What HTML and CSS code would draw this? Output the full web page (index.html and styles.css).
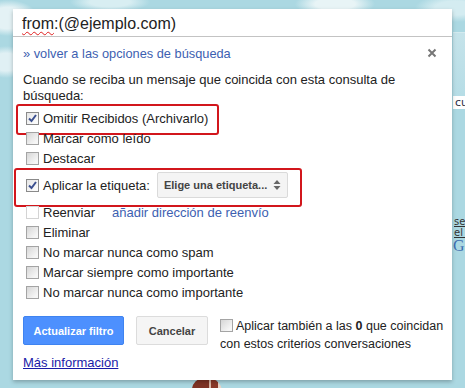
FILE: index.html
```html
<!DOCTYPE html>
<html lang="es">
<head>
<meta charset="utf-8">
<title>Filtro</title>
<link rel="stylesheet" href="styles.css">
</head>
<body>
<div class="page">
  <div class="backdrop">
    <div class="bd-top"></div>
    <div class="bd-band"></div>
    <div class="bd-row">cu</div>
    <div class="bd-fill"></div>
    <div class="bd-link">se</div>
    <div class="bd-link">el p</div>
    <div class="bd-g">G</div>
  </div>
  <div class="doodle"></div>
  <div class="dialog">
    <div class="search"><span class="squiggle">from</span>:(@ejemplo.com)</div>
    <div class="content">
      <div class="head">
        <a class="back" href="#">» volver a las opciones de búsqueda</a>
        <svg class="close" width="10" height="10" viewBox="0 0 10 10"><path d="M1.5 1.5 L8.5 8.5 M8.5 1.5 L1.5 8.5" stroke="#777" stroke-width="2" fill="none"/></svg>
      </div>
      <p class="intro">Cuando se reciba un mensaje que coincida con esta consulta de búsqueda:</p>
      <ul class="opts">
        <li class="opt hl hl1"><span class="cb checked"><svg width="11" height="11" viewBox="0 0 11 11"><path d="M2 5.5 L4.5 8 L9 2" stroke="#3b4f8f" stroke-width="2" fill="none"/></svg></span>Omitir Recibidos (Archivarlo)</li>
        <li class="opt"><span class="cb"></span>Marcar como leído</li>
        <li class="opt"><span class="cb"></span>Destacar</li>
        <li class="opt tall hl hl2"><span class="cb checked"><svg width="11" height="11" viewBox="0 0 11 11"><path d="M2 5.5 L4.5 8 L9 2" stroke="#3b4f8f" stroke-width="2" fill="none"/></svg></span>Aplicar la etiqueta:<span class="select">Elige una etiqueta...<svg class="arrows" width="8" height="12" viewBox="0 0 8 12"><path d="M0.5 5 L4 1 L7.5 5 Z M0.5 7 L4 11 L7.5 7 Z" fill="#666"/></svg></span></li>
        <li class="opt"><span class="cb disabled"></span>Reenviar<a class="fwd" href="#">añadir dirección de reenvío</a></li>
        <li class="opt"><span class="cb"></span>Eliminar</li>
        <li class="opt"><span class="cb"></span>No marcar nunca como spam</li>
        <li class="opt"><span class="cb"></span>Marcar siempre como importante</li>
        <li class="opt"><span class="cb"></span>No marcar nunca como importante</li>
      </ul>
      <div class="actions">
        <button class="btn primary">Actualizar filtro</button>
        <button class="btn">Cancelar</button>
        <div class="also"><span class="cb"></span>Aplicar también a las <b>0</b> que coincidan<br>con estos criterios conversaciones</div>
      </div>
      <a class="more" href="#">Más información</a>
    </div>
  </div>
</div>
</body>
</html>
```
FILE: styles.css
```css
* { box-sizing: border-box; }
html, body { margin: 0; padding: 0; }
body {
  font-family: "Liberation Sans", Arial, sans-serif;
  background: #abd8e2;
}
.page {
  position: relative;
  width: 465px;
  height: 388px;
  overflow: hidden;
  background:
    radial-gradient(ellipse 30px 18px at 8px 18px, #e4f2f5 60%, rgba(228,242,245,0) 100%),
    radial-gradient(ellipse 24px 16px at 6px 62px, #e0f0f4 55%, rgba(224,240,244,0) 100%),
    radial-gradient(ellipse 40px 10px at 110px 2px, #d8eef2 50%, rgba(216,238,242,0) 100%),
    radial-gradient(ellipse 40px 12px at 335px 4px, #e8f4f6 50%, rgba(232,244,246,0) 100%),
    radial-gradient(ellipse 40px 14px at 455px 8px, #d4ecf1 50%, rgba(212,236,241,0) 100%),
    #abd8e2;
}
.backdrop {
  display: flex;
  flex-direction: column;
  padding-left: 453px;
  height: 100%;
  font-family: "DejaVu Sans", sans-serif;
  font-size: 12px;
  color: #222;
  white-space: nowrap;
}
.bd-top { height: 32px; }
.bd-band { height: 64px; background: linear-gradient(#c5e3ea, #b6dde6); border-top: 1px solid #d3eaef; }
.bd-row { height: 13px; background: #fff; line-height: 13px; padding-left: 2px; color: #2a2a40; font-size: 11px; }
.bd-fill { height: 107px; }
.bd-link { line-height: 11px; height: 11px; text-decoration: underline; color: #333; padding-left: 1px; font-size: 10px; }
.bd-g { font-family: "Liberation Serif", serif; font-size: 16px; color: #3f6fb0; line-height: 16px; }
.doodle {
  position: absolute;
  left: 192px;
  top: 378px;
  width: 30px;
  height: 14px;
  border-radius: 12px 14px 0 0;
  background: linear-gradient(90deg, #7e3325 0 55%, #d9b7a6 55% 62%, #8a3a2a 62% 85%, #e9d3c6 85%);
}
.dialog {
  position: absolute;
  left: 13px;
  top: 9px;
  width: 439px;
  height: 371px;
  background: #fff;
  box-shadow: 0 2px 4px rgba(0,0,0,0.25);
}
.search {
  height: 28px;
  border-bottom: 1px solid #c3c3c3;
  padding: 4px 0 0 9px;
  font-size: 16px;
  line-height: 22px;
  color: #222;
}
.squiggle {
  text-decoration: underline wavy #e02020;
  text-decoration-thickness: 1px;
  text-underline-offset: 2px;
}
.content { padding: 8px 10px 0 10px; }
.head {
  display: flex;
  align-items: center;
  justify-content: space-between;
  height: 16px;
}
.back {
  font-size: 12.8px;
  color: #3d5fb1;
  text-decoration: none;
}
.close { margin-right: 5px; }
.intro {
  margin: 11px 0 4px 0;
  font-size: 13px;
  line-height: 16px;
  color: #222;
  width: 400px;
}
.opts { list-style: none; margin: 0; padding: 0; }
.opt {
  position: relative;
  display: flex;
  align-items: center;
  height: 20px;
  font-size: 13px;
  color: #222;
  padding-left: 3px;
}
.opt.tall { height: 34px; }
.hl::after {
  content: "";
  position: absolute;
  border: 2px solid #d2161c;
  border-radius: 3px;
  pointer-events: none;
}
.hl1::after { left: -7px; top: -4px; width: 199px; height: 27px; }
.hl2::after { left: -9px; top: 0px; width: 284px; height: 35px; }
.cb {
  display: inline-flex;
  align-items: center;
  justify-content: center;
  width: 13px;
  height: 13px;
  margin-right: 4px;
  border: 1px solid #a4a4a4;
  background: linear-gradient(135deg, #d6d6d6, #f6f6f6 80%);
  flex: none;
}
.cb.checked { background: linear-gradient(135deg, #e6e6e6, #fafafa 80%); border-color: #8a8a8a; }
.cb.disabled { border-color: #d4d4d4; background: #fff; }
.select {
  display: inline-flex;
  align-items: center;
  justify-content: space-between;
  margin-left: 7px;
  width: 131px;
  height: 26px;
  padding: 0 6px 0 6px;
  background: #f4f4f4;
  border: 1px solid #dadada;
  border-radius: 2px;
  font-size: 11px;
  font-weight: bold;
  color: #444;
}
.fwd {
  margin-left: 17px;
  color: #3d5fb1;
  text-decoration: none;
}
.actions {
  display: flex;
  align-items: flex-start;
  margin-top: 14px;
}
.btn {
  flex: none;
  height: 29px;
  padding: 0;
  font-family: "Liberation Sans", Arial, sans-serif;
  font-size: 11px;
  font-weight: bold;
  border-radius: 2px;
  border: 1px solid #dcdcdc;
  background: #f5f5f5;
  color: #444;
  width: 72px;
  margin-right: 12px;
}
.btn.primary {
  width: 101px;
  background: #4d90fe;
  border-color: #3f83f0;
  color: #fff;
}
.also {
  flex: none;
  white-space: nowrap;
  font-size: 12.5px;
  line-height: 18px;
  color: #222;
  margin-top: 1px;
}
.also .cb { vertical-align: -2px; margin-right: 3px; }
.also b { font-weight: bold; }
.more {
  display: inline-block;
  margin-top: 0;
  font-size: 13px;
  line-height: 16px;
  color: #1a1aa8;
  text-decoration: underline;
}
```
